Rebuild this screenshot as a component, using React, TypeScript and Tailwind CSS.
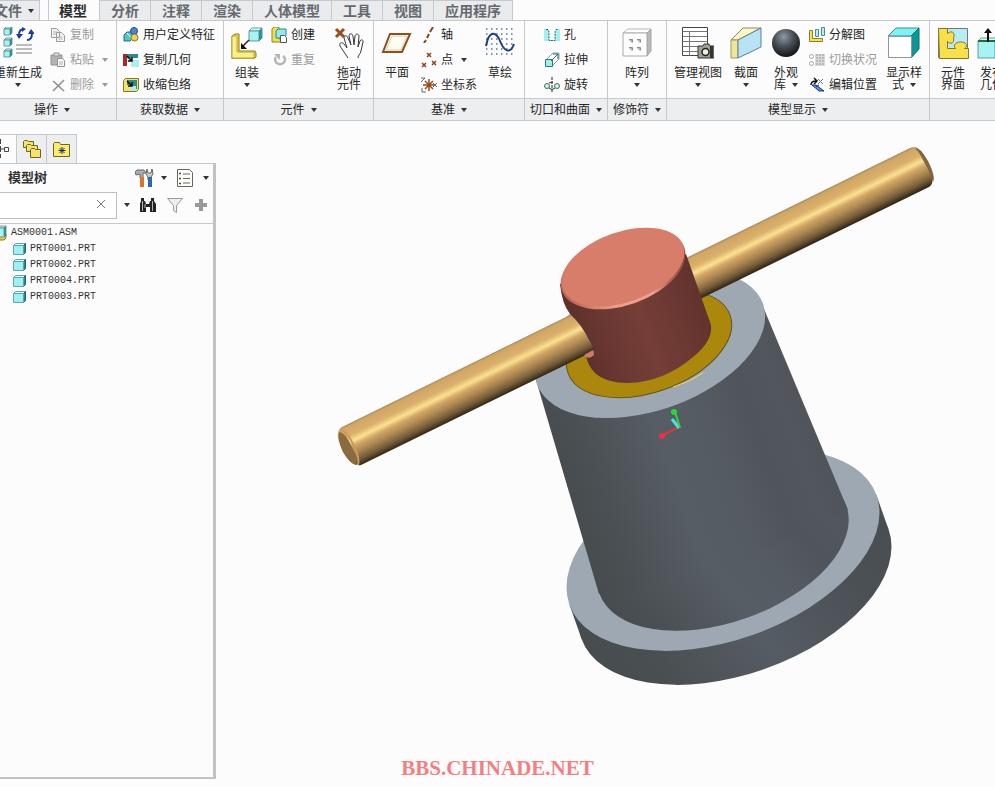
import type { ReactNode } from "react";

const UI_FONT = "font-['Liberation_Sans','Noto_Sans_CJK_SC',sans-serif]";

const TABS = ["模型", "分析", "注释", "渲染", "人体模型", "工具", "视图", "应用程序"];

const PARTS = ["PRT0001.PRT", "PRT0002.PRT", "PRT0004.PRT", "PRT0003.PRT"];

function Arrow({ muted = false }: { muted?: boolean }) {
  return (
    <svg viewBox="0 0 6 4" className={`w-1.5 h-1 shrink-0 ${muted ? "fill-[#9a9a9a]" : "fill-[#333]"}`} aria-hidden="true">
      <path d="M0 0h6L3 4z" />
    </svg>
  );
}

function Icon({ size, children }: { size: 16 | 20 | 32; children: ReactNode }) {
  const box = size === 32 ? "size-8" : size === 20 ? "size-5" : "size-4";
  return (
    <svg viewBox={`0 0 ${size} ${size}`} className={`${box} shrink-0`} fill="none" aria-hidden="true">
      {children}
    </svg>
  );
}

/* ---------- ribbon building blocks ---------- */

function Group({ title, className, children }: { title?: string; className: string; children: ReactNode }) {
  return (
    <section className={`flex flex-col border-r border-[#c6c9cc] ${className}`}>
      <div className="flex h-[77px] items-start">{children}</div>
      <div className="flex h-[23px] items-center justify-center border-y border-[#c6c9cc] bg-[#eceef0]">
        {title && (
          <button className="flex items-center gap-1.5 whitespace-nowrap">
            {title}
            <Arrow />
          </button>
        )}
      </div>
    </section>
  );
}

type BigProps = { lines: string[]; arrow?: "below" | "inline"; className?: string; children: ReactNode };

function BigButton({ lines, arrow, className = "w-12", children }: BigProps) {
  return (
    <button className={`flex shrink-0 flex-col items-center pt-1.5 leading-3 whitespace-nowrap ${className}`}>
      <Icon size={32}>{children}</Icon>
      <span className="mt-2 flex flex-col items-center">
        {lines.map((line, i) => (
          <span key={line} className="flex items-center gap-1.5">
            {line}
            {arrow === "inline" && i === lines.length - 1 && <Arrow />}
          </span>
        ))}
      </span>
      {arrow === "below" && (
        <span className="mt-1">
          <Arrow />
        </span>
      )}
    </button>
  );
}

type SmallProps = { label: string; arrow?: boolean; muted?: boolean; children: ReactNode };

function SmallButton({ label, arrow, muted, children }: SmallProps) {
  return (
    <button className={`flex h-[25px] items-center gap-1 whitespace-nowrap ${muted ? "text-[#9b9b9b]" : ""}`}>
      <Icon size={16}>{children}</Icon>
      {label}
      {arrow && (
        <span className="ml-1 flex">
          <Arrow muted={muted} />
        </span>
      )}
    </button>
  );
}

function Stack({ className, children }: { className: string; children: ReactNode }) {
  return <div className={`flex shrink-0 flex-col pt-px ${className}`}>{children}</div>;
}

/* small cube used by several icons */
function Cube({ x, y, s, d }: { x: number; y: number; s: number; d: number }) {
  return (
    <g stroke="#4b8489" strokeWidth=".8" strokeLinejoin="round">
      <path d={`M${x} ${y + d}l${d} ${-d}h${s}l${-d} ${d}z`} fill="#d2fdfd" />
      <path d={`M${x + s} ${y + d}l${d} ${-d}v${s}l${-d} ${d}z`} fill="#1f9c9c" />
      <path d={`M${x} ${y + d}h${s}v${s}h${-s}z`} fill="#a5f3f3" />
    </g>
  );
}

function Ribbon() {
  return (
    <div className="-ml-3 flex overflow-hidden bg-[#fcfcfc]">
      <Group title="操作" className="w-[129px] shrink-0">
        <BigButton lines={["重新生成"]} arrow="below" className="ml-1.5 w-12">
          <Cube x={2} y={0} s={6} d={2} />
          <Cube x={2} y={11} s={6} d={2} />
          <Cube x={2} y={22} s={6} d={2} />
          <path d="M22 2c-4 0-5 3-5 6M25 13c4 0 5-3 5-7" stroke="#1d3f96" strokeWidth="2" />
          <path d="M14 7h7l-4 5zM26 7h7l-4-5zM20 0v5l4-3z" fill="#1d3f96" />
          <path d="M14 18h16M14 22h16M14 26h16" stroke="#7c7c7c" />
        </BigButton>
        <Stack className="ml-2">
          <SmallButton label="复制" muted>
            <path d="M1.500 1.500h5l3 3v6h-8zM6.500 5.500h5l3 3v6h-8z" fill="#f2f2f2" stroke="#9b9b9b" />
            <path d="M3 5h4M3 7h3M8.500 10h4M8.500 12h4" stroke="#b5b5b5" />
          </SmallButton>
          <SmallButton label="粘贴" arrow muted>
            <path d="M1 3h11v10H1z" fill="#b3b3b3" stroke="#929292" />
            <path d="M4 1h5v3H4z" fill="#e0e0e0" stroke="#929292" />
            <path d="M7.500 6.500h5l2 2v6h-7z" fill="#f7f7f7" stroke="#929292" />
            <path d="M9 10h4M9 12h4" stroke="#b5b5b5" />
          </SmallButton>
          <SmallButton label="删除" arrow muted>
            <path d="M3 4l11 10M14 3L3 14" stroke="#8d8d8d" strokeWidth="1.500" />
          </SmallButton>
        </Stack>
      </Group>

      <Group title="获取数据" className="w-[107px] shrink-0">
        <Stack className="ml-1.5">
          <SmallButton label="用户定义特征">
            <path d="M1 8l3-3h6v6l-3 3H1z" fill="#4fc3d0" stroke="#226a86" />
            <path d="M4 6l6 7" stroke="#e8ffff" />
            <circle cx="11" cy="4" r="3.500" fill="#5182c8" stroke="#224b8e" />
            <circle cx="11.500" cy="10.500" r="3.500" fill="#f0cf55" stroke="#8c7a20" />
          </SmallButton>
          <SmallButton label="复制几何">
            <path d="M0 2h4v12H0z" fill="#a82727" />
            <path d="M4 2h11v4H4z" fill="#298c8c" />
            <path d="M4 6h5v4H4zM8 8h8v7H8z" fill="#a7eff2" />
            <path d="M4 4l5 5M9 5v4H5" stroke="#111" strokeWidth="1.500" />
          </SmallButton>
          <SmallButton label="收缩包络">
            <path d="M.5 3.500l2-2h13v11l-2 2H.5z" fill="#f3e36a" stroke="#84772a" />
            <path d="M4 3h10v9H8V8H4z" fill="#2b8e89" />
            <path d="M8 9h5v5H8z" fill="#a7eff2" />
            <path d="M4 4l5 5M9 5v4H5" stroke="#111" strokeWidth="1.500" />
          </SmallButton>
        </Stack>
      </Group>

      <Group title="元件" className="w-[150px] shrink-0">
        <BigButton lines={["组装"]} arrow="below" className="w-[46px]">
          <path d="M1 9l3-2h4v17h16l1 2v4l-3 2H1z" fill="#f2dc35" stroke="#8c7b22" />
          <path d="M1 9h5v16h17v6H1z" fill="#faf08a" stroke="#b9a636" />
          <Cube x={18} y={1} s={10} d={3} />
          <path d="M18 13l-6 6" stroke="#222" strokeWidth="1.500" />
          <path d="M10 22v-6l6 6z" fill="#111" />
        </BigButton>
        <Stack className="ml-px">
          <SmallButton label="创建">
            <path d="M1 2l2-2h5v12h5v3H1z" fill="#f3de4f" stroke="#958221" />
            <path d="M5 4l2-2h8v7l-2 2H5z" fill="#93e9ee" stroke="#28868b" />
            <path d="M9.500 8.500h4l2 2v5h-6z" fill="#fff" stroke="#555" />
          </SmallButton>
          <SmallButton label="重复" muted>
            <path d="M5 5a5 4.500 0 1 0 7-1" stroke="#b5b5b5" strokeWidth="2.500" />
            <path d="M3 2h6v6z" fill="#b5b5b5" />
          </SmallButton>
        </Stack>
        <div className="ml-2 h-[68px] w-px self-center bg-[#e2e3e4]" />
        <BigButton lines={["拖动", "元件"]} className="w-[52px]">
          <path d="M3 2l8 8M11 2l-8 8" stroke="#a14b1c" strokeWidth="3" />
          <path
            d="M15 31l-8-12c-1-4 2-4 4-2l3 4-3-10c0-3 3-3 4 0l3 7-2-9c0-3 3-3 4 0l1 9 1-9c1-3 4-2 4 0l-1 11 2-6c1-2 4-1 3 1l-2 9c-1 4-3 4-3 7"
            fill="#fff"
            stroke="#3a3a3a"
          />
        </BigButton>
      </Group>

      <Group title="基准" className="w-[151px] shrink-0">
        <BigButton lines={["平面"]} className="w-[46px]">
          <path d="M9 7h20l-8 18H2z" stroke="#8a501f" strokeWidth="2" fill="#fdfdf2" />
          <path d="M11 9h15l-6 14H5z" stroke="#d9cfa8" />
        </BigButton>
        <Stack className="ml-px">
          <SmallButton label="轴">
            <path d="M12 0L9 5M8 7l-2 4M5 13l-2 3" stroke="#8a451c" strokeWidth="2" />
          </SmallButton>
          <SmallButton label="点" arrow>
            <path d="M6 1l4 4M10 1L6 5M1 11l4 4M5 11l-4 4M11 9l4 4M15 9l-4 4" stroke="#8f4219" strokeWidth="1.500" />
          </SmallButton>
          <SmallButton label="坐标系">
            <path d="M8 2v12M2 8h12M4 4l8 8M12 4l-8 8" stroke="#9a4a1c" strokeWidth="1.500" />
            <path d="M0 1l4 0-4 4M12 6l4 4M16 6l-4 4M1 11v4h4" stroke="#666" />
          </SmallButton>
        </Stack>
        <BigButton lines={["草绘"]} className="w-[46px]">
          <path
            d="M2 2h29M2 7h29M2 12h29M2 17h29M2 22h29M2 27h29"
            stroke="#8296b3"
            strokeWidth="2"
            strokeDasharray="1.500 3.500"
          />
          <path d="M2 19C5 3 12 4 16 14s10 14 14 3" stroke="#1d3f85" strokeWidth="2" />
        </BigButton>
      </Group>

      <Group title="切口和曲面" className="w-[83px] shrink-0">
        <Stack className="ml-[19px]">
          <SmallButton label="孔">
            <path d="M0 2h16v12H0z" fill="#a5eff1" />
            <path d="M3 2l2 2v9h6V4l2-2z" fill="#fff" />
            <path d="M2 2.500h2l1 2v9h6v-9l1-2h2" stroke="#226a6c" strokeDasharray="2 1" />
          </SmallButton>
          <SmallButton label="拉伸">
            <path d="M2 8l7-7h6v6l-7 7" stroke="#7fa5a6" />
            <path d="M1.500 7.500h7v7h-7z" fill="#9ff0ec" stroke="#36787a" />
            <path d="M7 9l7-7M9 2h5v5" stroke="#27696b" />
          </SmallButton>
          <SmallButton label="旋转">
            <path d="M8 0v16" stroke="#222" strokeDasharray="3 1" />
            <circle cx="3" cy="9" r="2.500" fill="#c9f6e6" stroke="#41716b" />
            <circle cx="13" cy="9" r="2.500" fill="#c9f6e6" stroke="#41716b" />
            <path d="M5 6l4-1M5 11q3 3 6 0" stroke="#333" />
          </SmallButton>
        </Stack>
      </Group>

      <Group title="修饰符" className="w-[59px] shrink-0">
        <BigButton lines={["阵列"]} arrow="below" className="w-[58px]">
          <path d="M2 6l5-4h23l-4 4z" fill="#fff" stroke="#b6b6b6" />
          <path d="M26 6l4-4v22l-4 5z" fill="#b9b9b9" stroke="#a6a6a6" />
          <path d="M2 6h24v23H2z" fill="#fdfdfd" stroke="#aaa" />
          <path d="M8 12.500h3.500v3M16 12.500h3.500v3M8 20.500h3.500v3M16 20.500h3.500v3" stroke="#8b8b8b" />
          <path d="M8 13h3v3zM16 13h3v3zM8 21h3v3zM16 21h3v3z" fill="#b5b5b5" />
        </BigButton>
      </Group>

      <Group title="模型显示" className="w-[263px] shrink-0">
        <BigButton lines={["管理视图"]} arrow="below" className="w-[62px]">
          <path d="M.5.500h25v28H.5z" fill="#fff" stroke="#444" />
          <path d="M.5 4.500h25M.5 9.500h25M.5 14.500h25M.5 19.500h25M.5 24.500h25M7.500 4v25" stroke="#777" />
          <path d="M16 19h5l1-2h5l1 2h4v12H16z" fill="#a09f92" stroke="#333" />
          <path d="M28 19h3v12h-3z" fill="#333" />
          <circle cx="23.500" cy="25" r="3.500" fill="#f3efd6" stroke="#222" strokeWidth="1.500" />
        </BigButton>
        <BigButton lines={["截面"]} arrow="below" className="w-[34px]">
          <path d="M1 13L13 1h18L8 13z" fill="#fbf7c4" stroke="#8f8b60" />
          <path d="M1 13h7v18H1z" fill="#f1e59a" stroke="#a2975a" />
          <path d="M8 13L31 1v19L8 31z" fill="#b7e3f5" stroke="#58809a" />
        </BigButton>
        <BigButton lines={["外观", "库"]} arrow="inline" className="w-[46px]">
          <defs>
            <radialGradient id="ball" cx=".42" cy=".28" r=".75">
              <stop offset="0" stopColor="#8e99a5" />
              <stop offset=".45" stopColor="#4a5158" />
              <stop offset="1" stopColor="#0e0f11" />
            </radialGradient>
          </defs>
          <circle cx="16" cy="16" r="14" fill="url(#ball)" />
        </BigButton>
        <Stack>
          <SmallButton label="分解图">
            <path d="M.5 3.500h3v8h10v3H.5z" fill="#f5e25b" stroke="#8f7d22" />
            <path d="M6.500 2.500h3v7h-3zM12.500.5h3v8h-3z" fill="#b3eef0" stroke="#4f8b93" />
          </SmallButton>
          <SmallButton label="切换状况" muted>
            <circle cx="2.500" cy="4.500" r="2" stroke="#a5a5a5" />
            <circle cx="2.500" cy="11.500" r="2" stroke="#a5a5a5" />
            <path d="M6 2h10v12H6z" fill="#d9d9d9" />
            <path d="M7 3h9M7 6h9M7 9h9M7 12h9" stroke="#999" strokeDasharray="2 1" />
          </SmallButton>
          <SmallButton label="编辑位置">
            <path d="M2 8q0-4 5-4M5 1l3 3-3 3" stroke="#111" strokeWidth="1.500" />
            <path d="M9 2l5 5M14 2L9 7" stroke="#777" />
            <path d="M3 8h4l8 6h-5z" fill="#5c87d8" stroke="#173a85" />
            <path d="M10 8l-3 2" stroke="#173a85" />
          </SmallButton>
        </Stack>
        <BigButton lines={["显示样", "式"]} arrow="inline" className="ml-px w-[52px]">
          <path d="M0 9l8-8h23l-8 8z" fill="#7ef3f3" stroke="#3d8f92" />
          <path d="M23 9l8-8v21l-8 9z" fill="#0c9694" stroke="#0b6f6e" />
          <path d="M.5 9.500h23v21H.5z" fill="#fff" stroke="#8a9a9b" />
        </BigButton>
      </Group>

      <Group className="min-w-[66px] flex-1">
        <BigButton lines={["元件", "界面"]} className="w-[46px]">
          <path d="M1.500 1.500h29v29h-29z" fill="#b7edf2" stroke="#777" />
          <path
            d="M1.500 1.500h9v5c5-4 8 0 6 5 1 5-3 6-6 3v7h8c-5-6 8-9 11-4 1 2-1 3-2 4h4v10h-29z"
            fill="#f8e04a"
            stroke="#86742a"
          />
        </BigButton>
        <BigButton lines={["发布", "几何"]} className="-ml-2 w-12">
          <Cube x={2} y={11} s={17} d={3} />
          <path d="M2 14h17" stroke="#1f6d35" strokeWidth="2" />
          <path d="M12 15V5" stroke="#111" strokeWidth="2" />
          <path d="M8 6l4-5 4 5z" fill="#111" />
        </BigButton>
      </Group>
    </div>
  );
}

function TabBar() {
  return (
    <nav className="flex h-[21px] items-stretch overflow-hidden border-b border-[#c6c9cc] text-sm font-bold leading-5 text-[#65696d]">
      <button className="-ml-1.5 mr-2 flex w-[46px] items-center gap-1.5 whitespace-nowrap border-r border-t border-[#c6c9cc] bg-[#e9ebed]">
        文件
        <Arrow />
      </button>
      {TABS.map((tab, i) => (
        <button
          key={tab}
          className={`whitespace-nowrap border-r border-[#c6c9cc] ${
            i === 0 ? "-mb-px border-l bg-[#fcfcfc] pl-2.5 pr-3 text-[#2c2c2c]" : "border-t bg-[#e9ebed] px-[11px]"
          }`}
        >
          {tab}
        </button>
      ))}
    </nav>
  );
}

/* ---------- model tree ---------- */

function FolderTabs() {
  return (
    <div className="flex h-[29px] items-stretch">
      <button aria-label="模型树" className="flex w-[17px] items-center border-r border-t border-[#c6c9cc]">
        <svg viewBox="0 0 16 20" className="h-5 w-4" fill="none" stroke="#444" aria-hidden="true">
          <path d="M.5 0v5M.5 7v6M.5 10h4M.5 15v4M4.500 8.500h4v4h-4z" />
        </svg>
      </button>
      <button aria-label="文件夹浏览器" className="flex w-[30px] items-center justify-center border-r border-t border-[#c6c9cc] bg-[#eceef0]">
        <Icon size={20}>
          <g fill="#f8e36a" stroke="#6e6427">
            <path d="M1.500 8.500v-6l1-1h3l1 1h5v6z" />
            <path d="M4.500 12.500v-6l1-1h3l1 1h6v6z" />
            <path d="M8.500 18.500v-8l1-1h3l1 1h5v8z" />
          </g>
        </Icon>
      </button>
      <button aria-label="收藏夹" className="flex w-[30px] items-center justify-center border-r border-t border-[#c6c9cc] bg-[#eceef0]">
        <Icon size={20}>
          <path d="M1.500 17.500v-13l1-1h5l1 2h9v12z" fill="#fbec6c" stroke="#6e6427" />
          <path d="M10 8v7M6.500 11.500h7M7.500 9l5 5M12.500 9l-5 5" stroke="#1d2c7b" />
        </Icon>
      </button>
    </div>
  );
}

function ModelTree() {
  return (
    <aside className="flex w-[216px] shrink-0 flex-col pt-[13px] pb-2">
      <FolderTabs />
      <div className="flex flex-1 flex-col border-b-2 border-r-[3px] border-t border-[#c0c2c4] border-t-[#c6c9cc]">
        <div className="flex h-7 items-center pl-2 pr-1">
          <h2 className="flex-1 text-[13px] font-bold text-[#333]">模型树</h2>
          <button aria-label="设置" className="flex items-center gap-1.5">
            <Icon size={20}>
              <path d="M0 4l2-2h7l2 3H8v5H5V6L1 7z" fill="#a9b1b6" stroke="#666" />
              <path d="M5 9h4v10H5z" fill="#e2702a" />
              <path d="M12 1l1 4h3l1-4 1 5-2 3v3h-3V9l-2-3z" fill="#c7ccd0" stroke="#666" />
              <path d="M13 9h4v10h-4z" fill="#2c67b5" />
            </Icon>
            <Arrow />
          </button>
          <button aria-label="显示" className="ml-2 flex items-center gap-2">
            <Icon size={20}>
              <path d="M2.500 1.500h12l3 3v14h-15z" fill="#fdfdf4" stroke="#666" />
              <path d="M8 6h7M8 10.500h7M8 15h7" stroke="#666" />
              <path d="M4.500 5h1v1h-1zM4.500 10h1v1h-1zM4.500 15h1v1h-1z" stroke="#444" />
            </Icon>
            <Arrow />
          </button>
        </div>

        <div className="flex h-8 items-start border-b border-[#c6c9cc]">
          <div className="flex h-[27px] w-[117px] items-center border border-l-0 border-[#bcbfc2] bg-white">
            <input aria-label="搜索模型树" className="h-full min-w-0 flex-1 bg-transparent px-1 outline-none" />
            <button aria-label="清除" className="mr-2.5 mb-1">
              <svg viewBox="0 0 10 10" className="size-2.5" stroke="#777" aria-hidden="true">
                <path d="M1 1l8 8M9 1L1 9" />
              </svg>
            </button>
          </div>
          <div className="flex h-[26px] flex-1 items-center justify-between pl-[7px] pr-1">
            <button aria-label="搜索选项">
              <Arrow />
            </button>
            <button aria-label="查找">
              <Icon size={20}>
                <path d="M3 3h3v3h1l1 3h3l1-3h1V3h3v3l2 3v8h-6v-5H8v5H2V9l1-3z" fill="#222" />
                <path d="M4.500 6v10M14.500 6v10M7 9v4" stroke="#b5b5b5" />
              </Icon>
            </button>
            <button aria-label="过滤">
              <Icon size={20}>
                <path d="M2.500 3.500h15l-6 7v7l-3-2v-5z" fill="#eee" stroke="#9a9a9a" />
              </Icon>
            </button>
            <button aria-label="添加">
              <Icon size={16}>
                <path d="M8 2v12M2 8h12" stroke="#999" strokeWidth="4" />
              </Icon>
            </button>
          </div>
        </div>

        <ul className="pt-px font-['Liberation_Mono',monospace] text-[10px] leading-4 text-[#333]">
          <li className="-ml-1.5 flex items-center gap-px">
            <Icon size={16}>
              <path d="M2 7h8v5l2-3v4l-2 2H2z" fill="#f1cd35" stroke="#8a7424" />
              <Cube x={1} y={1} s={9} d={2} />
            </Icon>
            ASM0001.ASM
          </li>
          {PARTS.map((part) => (
            <li key={part} className="flex items-center gap-0.5 pl-3">
              <Icon size={16}>
                <path d="M1.500 4.500l2-2h10l-2 2z" fill="#d8ffff" stroke="#6fa3a8" />
                <path d="M11.500 4.500l2-2v9l-2 2z" fill="#1c8d8d" stroke="#25696c" />
                <path d="M1.500 4.500h10v9h-10z" fill="#9af0f2" stroke="#62a5aa" />
              </Icon>
              {part}
            </li>
          ))}
        </ul>
      </div>
    </aside>
  );
}

/* ---------- 3D viewport ---------- */

const TILT = -19.6;

type DiscProps = { cx: number; cy: number; a: number; b: number; fill: string; stroke?: string };

function Disc({ cx, cy, a, b, fill, stroke }: DiscProps) {
  return <ellipse cx={cx} cy={cy} rx={a} ry={b} transform={`rotate(${TILT} ${cx} ${cy})`} fill={fill} stroke={stroke} />;
}

function Viewport() {
  return (
    <svg viewBox="216 121 779 666" className="block h-full w-full" role="img" aria-label="装配模型">
      <defs>
        <linearGradient id="steel" gradientUnits="userSpaceOnUse" x1="570" y1="520" x2="836" y2="425">
          <stop offset="0" stopColor="#464c4e" />
          <stop offset=".14" stopColor="#4a5053" />
          <stop offset=".4" stopColor="#575d65" />
          <stop offset=".58" stopColor="#555b62" />
          <stop offset=".72" stopColor="#4f555a" />
          <stop offset=".85" stopColor="#51575d" />
          <stop offset="1" stopColor="#4c5257" />
        </linearGradient>
        <linearGradient id="flange" gradientUnits="userSpaceOnUse" x1="570" y1="640" x2="892" y2="530">
          <stop offset="0" stopColor="#464c4e" />
          <stop offset=".2" stopColor="#4a5052" />
          <stop offset=".48" stopColor="#565c64" />
          <stop offset=".8" stopColor="#4a5054" />
          <stop offset="1" stopColor="#484e51" />
        </linearGradient>
        <linearGradient id="brass" gradientUnits="userSpaceOnUse" x1="342" y1="427" x2="360.6" y2="464.9">
          <stop offset="0" stopColor="#a98a5b" />
          <stop offset=".05" stopColor="#d0a665" />
          <stop offset=".26" stopColor="#dbb06b" />
          <stop offset=".4" stopColor="#fbe192" />
          <stop offset=".52" stopColor="#d2a764" />
          <stop offset=".7" stopColor="#a6834f" />
          <stop offset=".87" stopColor="#725a37" />
          <stop offset="1" stopColor="#35291a" />
        </linearGradient>
        <linearGradient id="copper" gradientUnits="userSpaceOnUse" x1="575" y1="335" x2="704" y2="289">
          <stop offset="0" stopColor="#5d302b" />
          <stop offset=".2" stopColor="#693732" />
          <stop offset=".5" stopColor="#753e37" />
          <stop offset=".8" stopColor="#693731" />
          <stop offset="1" stopColor="#60312c" />
        </linearGradient>
        <linearGradient id="rim" x1="0" y1="0" x2="1" y2="0">
          <stop offset="0" stopColor="#b9604f" />
          <stop offset=".35" stopColor="#ef9d88" />
          <stop offset=".65" stopColor="#f0a28e" />
          <stop offset=".8" stopColor="#b7685a" />
          <stop offset="1" stopColor="#8b463c" />
        </linearGradient>
      </defs>

      {/* base flange */}
      <Disc cx={735} cy={584} a={163} b={90} fill="url(#flange)" />
      <path d="M569.500 604.700L581.500 638.700L888.500 529.300L876.500 495.300Z" fill="url(#flange)" />
      <Disc cx={723} cy={550} a={163} b={90} fill="#9ea8b2" />

      {/* tapered body */}
      <Disc cx={723} cy={550} a={131} b={72} fill="url(#steel)" />
      <path d="M536 380L599 594L723 570L848 510L764 309Z" fill="url(#steel)" />
      <Disc cx={650} cy={344} a={120} b={66} fill="#9ea8b2" />
      <Disc cx={649} cy={344} a={86} b={48} fill="#ab880c" stroke="#62551a" />
      <path d="M673 387Q690 382 703 373" stroke="#ecd07a" fill="none" />

      {/* handle */}
      <path d="M342 427L910 148Q919 144 927 161Q937 182 929 187L361 465Q352 467 343 452Q333 432 342 427Z" fill="url(#brass)" />
      <path d="M914 147Q920 147 928 161Q936 177 933 182Q930 172 923 160Q918 150 914 147Z" fill="#806640" />
      <path d="M339 432Q345 432 352 447Q359 461 356 465Q350 464 343 452Q337 439 339 432Z" fill="#8a6b40" />
      <path d="M341 430Q347 431 354 446Q360 459 358 465" stroke="#c79b5b" strokeWidth="2" fill="none" />

      {/* screw head, notched where the handle enters it */}
      <path
        d="M560 284Q562 304 570 314Q582 325 589 340Q594 347 594 353L586 356Q588 366 595 373Q606 383 628 383Q664 382 693 357Q713 341 711 325L686 254Z"
        fill="url(#copper)"
      />
      <path d="M584 355L593 350L594 355Q590 359 586 357Z" fill="#cd7b6b" />
      <Disc cx={623} cy={269} a={65} b={36} fill="url(#rim)" />
      <Disc cx={623} cy={267} a={64} b={35} fill="#d97d6b" />

      {/* orientation triad */}
      <path d="M661 436L679 427" stroke="#e2343f" strokeWidth="2" />
      <circle cx="662" cy="436" r="3" fill="#ee3048" />
      <path d="M672 419L679 428" stroke="#4fdfe0" strokeWidth="3" />
      <path d="M675 412L680 428" stroke="#35d24e" strokeWidth="2" />
      <circle cx="674" cy="412" r="3" fill="#27d936" />
    </svg>
  );
}

export default function App() {
  return (
    <div className={`relative flex h-screen flex-col overflow-hidden bg-[#fcfcfc] text-xs text-[#262626] ${UI_FONT}`}>
      <header>
        <TabBar />
        <Ribbon />
      </header>
      <div className="flex min-h-0 flex-1">
        <ModelTree />
        <main className="min-w-0 flex-1">
          <Viewport />
        </main>
      </div>
      <p className="pointer-events-none absolute inset-x-0 bottom-[5px] text-center font-['Liberation_Serif',serif] text-[21px] font-bold leading-7 text-[#f47f80]">
        BBS.CHINADE.NET
      </p>
    </div>
  );
}
